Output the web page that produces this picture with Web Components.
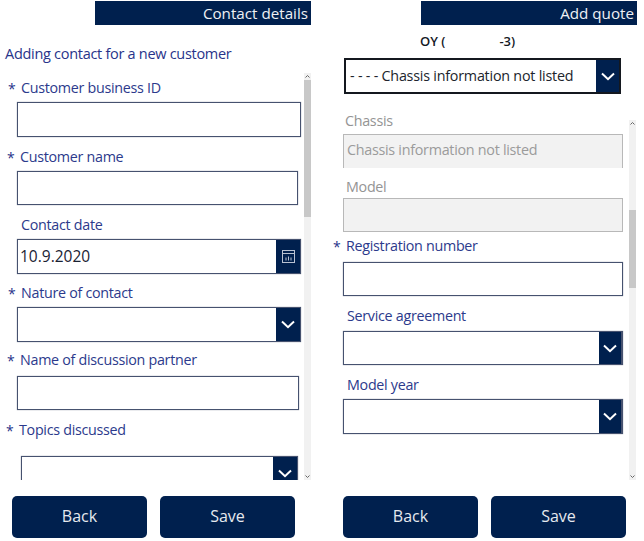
<!DOCTYPE html>
<html>
<head>
<meta charset="utf-8">
<title>Contact details</title>
<style>
    html, body { margin: 0; background: #fff; }
    body {
        width: 644px;
        height: 541px;
        overflow: hidden;
        display: flex;
        font-family: "Open Sans", "Liberation Sans", sans-serif;
    }
    .intro_left { margin: 19px 0 9px 5px; font-size: 14.5px; line-height: 20px; color: #28348a; letter-spacing: -0.02em; white-space: nowrap; }
    .owner { margin: 6px 0 0 98px; font-size: 13px; font-weight: 600; line-height: 20px; color: #14181f; display: flex; }
    .owner span + span { margin-left: 54px; }
</style>
</head>
<body>

<template id="panelTemplate">
    <style>
        :host { display: flex; flex-direction: column; width: 322px; height: 541px; box-sizing: border-box; }
        .title {
            margin: 1px 0 0 var(--title-x);
            width: 216px;
            height: 24px;
            box-sizing: border-box;
            padding-right: 3px;
            background: #00204e;
            color: #eef0f4;
            font-size: 15.2px;
            line-height: 24px;
            text-align: right;
            white-space: nowrap;
        }
        .body { display: flex; height: var(--scroll-h); }
        .form { width: var(--form-w); overflow: hidden; height: 100%; }
        .footer { display: flex; gap: 13px; margin: 16px 0 0 var(--foot-x); }
    </style>
    <div class="title"></div>
    <slot name="intro"></slot>
    <div class="body">
        <div class="form"><slot></slot></div>
        <slot name="bar"></slot>
    </div>
    <div class="footer"><slot name="footer"></slot></div>
</template>

<template id="fieldTemplate">
    <style>
        :host { display: block; margin-top: var(--mt, 10px); }
        .label {
            display: flex;
            height: 20px;
            line-height: 20px;
            margin-left: var(--lx, 21px);
            font-size: 14.3px;
            letter-spacing: -0.02em;
            color: #2c3a8c;
            white-space: nowrap;
        }
        .star { width: 13px; margin-left: -13px; padding-top: 1px; color: #28348a; font-size: 14px; display: none; }
        :host([required]) .star { display: block; }
        .box {
            display: flex;
            align-items: stretch;
            box-sizing: border-box;
            margin: var(--gap, 4px) 0 0 var(--bx, 17px);
            width: var(--bw, 284px);
            height: var(--bh, 35px);
            border: 1px solid #46526f;
            border-right-width: var(--edge, 1px);
            box-shadow: 0 0 1px rgba(50, 60, 90, 0.6);
            background: #fff;
        }
        .value { flex: 1; padding-left: 2px; font-size: 15.5px; line-height: 33px; color: #1a2233; }
        .btn { width: var(--btn-w, 24px); display: none; align-items: center; justify-content: center; background: #00204e; }
        :host([kind="select"]) .btn.sel, :host([kind="date"]) .btn.cal { display: flex; }
        :host([disabled]) .label { color: #949494; }
        :host([disabled]) .box { background: #f2f2f2; border-color: #b8b8b8; box-shadow: none; }
        :host([disabled]) .value { color: #9b9b9b; font-size: 14.35px; letter-spacing: -0.02em; padding-left: 3px; line-height: 30px; white-space: nowrap; }
        :host([open-bottom]) .box { border-bottom: none; }
    </style>
    <div class="label"><span class="star">*</span><slot></slot></div>
    <div class="box">
        <div class="value"></div>
        <div class="btn sel">
            <svg width="14" height="9" viewBox="0 0 14 9"><path d="M1 1.5 L7 7.2 L13 1.5" fill="none" stroke="#fff" stroke-width="2"/></svg>
        </div>
        <div class="btn cal">
            <svg width="13" height="13" viewBox="0 0 13 13" fill="none" stroke="#b9c2d2" stroke-width="1"><rect x="0.5" y="0.5" width="12" height="12"/><path d="M0.5 3.5 H12.5"/><path d="M4 7.5 V10.5 M6.5 6.5 V10.5 M9 7.5 V10.5"/></svg>
        </div>
    </div>
</template>

<template id="pickerTemplate">
    <style>
        :host {
            display: flex;
            box-sizing: border-box;
            width: 277px;
            height: 36px;
            margin: 7px 0 0 22px;
            border: 2px solid #14181f;
            background: #fff;
        }
        .text { flex: 1; padding-left: 4px; font-size: 14.3px; line-height: 32px; letter-spacing: -0.015em; color: #20242c; white-space: nowrap; }
        .btn { width: 23px; display: flex; align-items: center; justify-content: center; background: #00204e; }
    </style>
    <div class="text"><slot></slot></div>
    <div class="btn"><svg width="14" height="9" viewBox="0 0 14 9"><path d="M1 1.5 L7 7.2 L13 1.5" fill="none" stroke="#fff" stroke-width="2"/></svg></div>
</template>

<template id="barTemplate">
    <style>
        :host { display: flex; flex-direction: column; width: 7px; margin-top: var(--bar-top, 0); background: #f1f1f1; }
        .arrow { height: 7px; display: flex; align-items: center; justify-content: center; }
        .track { flex: 1; }
        .thumb { margin-top: var(--thumb-top); height: var(--thumb-h); background: #c8c8c8; }
    </style>
    <div class="arrow"><svg width="5" height="3" viewBox="0 0 5 3"><path d="M0.5 2.5 L2.5 0.5 L4.5 2.5" fill="none" stroke="#666"/></svg></div>
    <div class="track"><div class="thumb"></div></div>
    <div class="arrow"><svg width="5" height="3" viewBox="0 0 5 3"><path d="M0.5 0.5 L2.5 2.5 L4.5 0.5" fill="none" stroke="#666"/></svg></div>
</template>

<template id="buttonTemplate">
    <style>
        :host {
            display: flex;
            align-items: center;
            justify-content: center;
            box-sizing: border-box;
            width: 135px;
            height: 42px;
            padding-bottom: 3px;
            border-radius: 5px;
            background: #00204e;
            color: #e6e9ef;
            font-size: 16px;
            cursor: pointer;
        }
    </style>
    <slot></slot>
</template>

<script>
function shadowFrom(el, id) {
    const root = el.attachShadow({ mode: 'open' });
    root.appendChild(document.getElementById(id).content.cloneNode(true));
    return root;
}

class AppPanel extends HTMLElement {
    constructor() {
        super();
        this.root = shadowFrom(this, 'panelTemplate');
    }

    connectedCallback() {
        this.root.querySelector('.title').textContent = this.getAttribute('title-text');
    }
}

class FormField extends HTMLElement {
    constructor() {
        super();
        this.root = shadowFrom(this, 'fieldTemplate');
    }

    connectedCallback() {
        this.root.querySelector('.value').textContent = this.getAttribute('value') || '';
    }
}

class ChassisPicker extends HTMLElement {
    constructor() {
        super();
        shadowFrom(this, 'pickerTemplate');
    }
}

class ScrollBar extends HTMLElement {
    constructor() {
        super();
        shadowFrom(this, 'barTemplate');
    }
}

class NavButton extends HTMLElement {
    constructor() {
        super();
        shadowFrom(this, 'buttonTemplate');
    }
}

customElements.define('app-panel', AppPanel);
customElements.define('form-field', FormField);
customElements.define('chassis-picker', ChassisPicker);
customElements.define('scroll-bar', ScrollBar);
customElements.define('nav-button', NavButton);
</script>

<app-panel title-text="Contact details" style="--title-x:95px;--scroll-h:407px;--form-w:304px;--foot-x:12px">
    <div slot="intro" class="intro_left">Adding contact for a new customer</div>

    <form-field required style="--mt:5px;--bw:284px">Customer business ID</form-field>
    <form-field required style="--lx:20px;--bw:281px;--bh:34px">Customer name</form-field>
    <form-field kind="date" value="10.9.2020">Contact date</form-field>
    <form-field required kind="select" style="--mt:9px">Nature of contact</form-field>
    <form-field required style="--mt:8px;--lx:20px;--gap:6px;--bw:282px;--bh:34px">Name of discussion partner</form-field>
    <form-field required kind="select" style="--lx:19px;--gap:16px;--bx:21px;--bw:277px">Topics discussed</form-field>

    <scroll-bar slot="bar" style="--thumb-top:0;--thumb-h:137px"></scroll-bar>

    <nav-button slot="footer">Back</nav-button>
    <nav-button slot="footer">Save</nav-button>
</app-panel>

<app-panel title-text="Add quote" style="--title-x:99px;--scroll-h:369px;--form-w:307px;--foot-x:21px">
    <div slot="intro">
        <div class="owner"><span>OY (</span><span>-3)</span></div>
        <chassis-picker>- - - - Chassis information not listed</chassis-picker>
        <div style="height:17px"></div>
    </div>

    <form-field disabled open-bottom value="Chassis information not listed" style="--mt:0;--lx:23px;--gap:3px;--bx:21px;--bw:280px;--bh:34px">Chassis</form-field>
    <form-field disabled style="--mt:9px;--lx:24px;--gap:1px;--bx:21px;--bw:280px;--bh:34px">Model</form-field>
    <form-field required style="--mt:4px;--lx:24px;--gap:6px;--bx:21px;--bw:280px;--bh:34px">Registration number</form-field>
    <form-field kind="select" style="--lx:25px;--gap:5px;--bx:21px;--bw:280px;--bh:34px;--edge:2px;--btn-w:22px">Service agreement</form-field>
    <form-field kind="select" style="--lx:25px;--bx:21px;--bw:280px;--edge:2px;--btn-w:22px">Model year</form-field>

    <scroll-bar slot="bar" style="--bar-top:9px;--thumb-top:83px;--thumb-h:78px"></scroll-bar>

    <nav-button slot="footer">Back</nav-button>
    <nav-button slot="footer">Save</nav-button>
</app-panel>

</body>
</html>
